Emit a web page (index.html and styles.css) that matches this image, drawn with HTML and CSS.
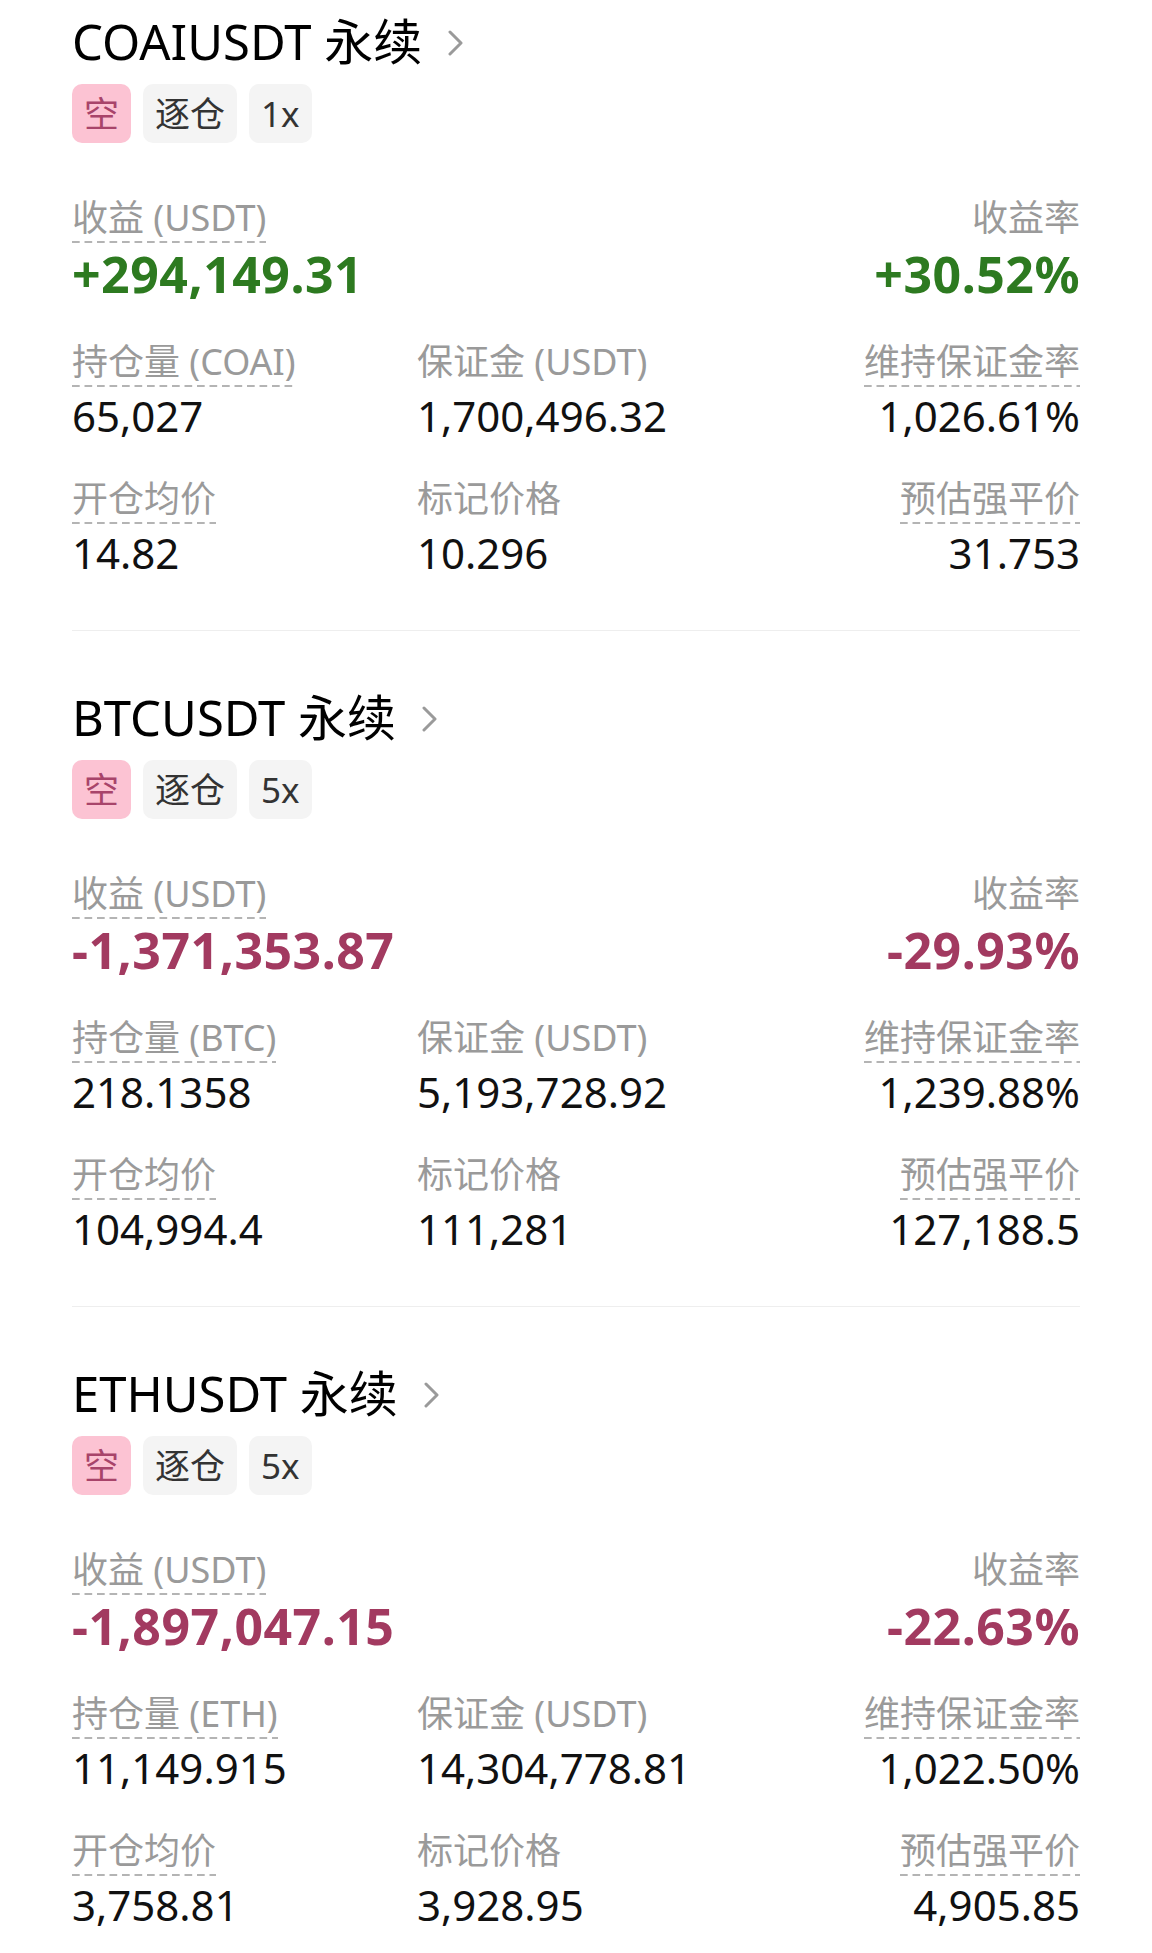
FILE: index.html
```html
<!DOCTYPE html>
<html lang="zh-cn">
<head>
<title>仓位</title>
<meta charset="utf-8">
<link rel="stylesheet" href="styles.css">
</head>
<body>
<div class="list">

    <div class="card">
        <div class="head"><span class="name">COAIUSDT 永续</span><svg class="arrow" width="16" height="26" viewBox="0 0 16 26"><polyline points="3,2 14,13 3,24"/></svg></div>
        <div class="tags"><span class="tag short">空</span><span class="tag">逐仓</span><span class="tag">1x</span></div>
        <div class="summary">
            <div class="cell"><span class="label dash">收益 (USDT)</span><div class="big up">+294,149.31</div></div>
            <div class="cell r"><span class="label">收益率</span><div class="big up">+30.52%</div></div>
        </div>
        <div class="grid">
            <div class="cell"><span class="label dash">持仓量 (COAI)</span><div class="val">65,027</div></div>
            <div class="cell"><span class="label">保证金 (USDT)</span><div class="val">1,700,496.32</div></div>
            <div class="cell r"><span class="label dash">维持保证金率</span><div class="val">1,026.61%</div></div>
            <div class="cell"><span class="label dash">开仓均价</span><div class="val">14.82</div></div>
            <div class="cell"><span class="label">标记价格</span><div class="val">10.296</div></div>
            <div class="cell r"><span class="label dash">预估强平价</span><div class="val">31.753</div></div>
        </div>
    </div>

    <div class="card">
        <div class="head"><span class="name">BTCUSDT 永续</span><svg class="arrow" width="16" height="26" viewBox="0 0 16 26"><polyline points="3,2 14,13 3,24"/></svg></div>
        <div class="tags"><span class="tag short">空</span><span class="tag">逐仓</span><span class="tag">5x</span></div>
        <div class="summary">
            <div class="cell"><span class="label dash">收益 (USDT)</span><div class="big down">-1,371,353.87</div></div>
            <div class="cell r"><span class="label">收益率</span><div class="big down">-29.93%</div></div>
        </div>
        <div class="grid">
            <div class="cell"><span class="label dash">持仓量 (BTC)</span><div class="val">218.1358</div></div>
            <div class="cell"><span class="label">保证金 (USDT)</span><div class="val">5,193,728.92</div></div>
            <div class="cell r"><span class="label dash">维持保证金率</span><div class="val">1,239.88%</div></div>
            <div class="cell"><span class="label dash">开仓均价</span><div class="val">104,994.4</div></div>
            <div class="cell"><span class="label">标记价格</span><div class="val">111,281</div></div>
            <div class="cell r"><span class="label dash">预估强平价</span><div class="val">127,188.5</div></div>
        </div>
    </div>

    <div class="card">
        <div class="head"><span class="name">ETHUSDT 永续</span><svg class="arrow" width="16" height="26" viewBox="0 0 16 26"><polyline points="3,2 14,13 3,24"/></svg></div>
        <div class="tags"><span class="tag short">空</span><span class="tag">逐仓</span><span class="tag">5x</span></div>
        <div class="summary">
            <div class="cell"><span class="label dash">收益 (USDT)</span><div class="big down">-1,897,047.15</div></div>
            <div class="cell r"><span class="label">收益率</span><div class="big down">-22.63%</div></div>
        </div>
        <div class="grid">
            <div class="cell"><span class="label dash">持仓量 (ETH)</span><div class="val">11,149.915</div></div>
            <div class="cell"><span class="label">保证金 (USDT)</span><div class="val">14,304,778.81</div></div>
            <div class="cell r"><span class="label dash">维持保证金率</span><div class="val">1,022.50%</div></div>
            <div class="cell"><span class="label dash">开仓均价</span><div class="val">3,758.81</div></div>
            <div class="cell"><span class="label">标记价格</span><div class="val">3,928.95</div></div>
            <div class="cell r"><span class="label dash">预估强平价</span><div class="val">4,905.85</div></div>
        </div>
    </div>

</div>
</body>
</html>
```

FILE: styles.css
```css
body{margin: 0;padding: 0;background: #FFF;font-family: "Noto Sans","Noto Sans CJK SC",sans-serif;color: #111;}
.list{padding: 0 72px;}
.card{padding: 56px 0 52px;border-bottom: 1px solid #EEE;}
.card:first-child{padding-top: 11px;}
.card:last-child{border-bottom: none;}

.head{display: flex;align-items: center;height: 60px;}
.name{font-size: 49px;line-height: 60px;color: #000;}
.arrow{margin-left: 25px;margin-top: 4px;}
.arrow polyline{fill: none;stroke: #9A9A9A;stroke-width: 3;stroke-linecap: round;stroke-linejoin: round;}

.tags{display: flex;gap: 12px;margin-top: 13px;}
.tag{height: 59px;line-height: 59px;padding: 0 12px;font-size: 35px;background: #F4F4F4;color: #333;border-radius: 10px;}
.tag.short{background: #FCC3D3;color: #A8446A;}

.summary{display: flex;justify-content: space-between;margin-top: 54px;}
.grid{display: grid;grid-template-columns: 345px 1fr 1fr;row-gap: 37px;margin-top: 40px;}
.cell.r{text-align: right;}

.label{display: inline-block;font-size: 36px;line-height: 42px;padding-bottom: 2px;border-bottom: 2px solid transparent;color: #9A9A9A;}
.label.dash{border-bottom: none;padding-bottom: 4px;background: linear-gradient(to right,#B4B4B4 58%,transparent 0) repeat-x left bottom / 12.5px 2px;}

.val{margin-top: 4px;font-size: 42px;line-height: 50px;color: #111;}
.big{margin-top: 4px;font-size: 50px;line-height: 54px;font-weight: 700;letter-spacing: 0.5px;}
.up{color: #2D7A20;}
.down{color: #A23A60;}
```
